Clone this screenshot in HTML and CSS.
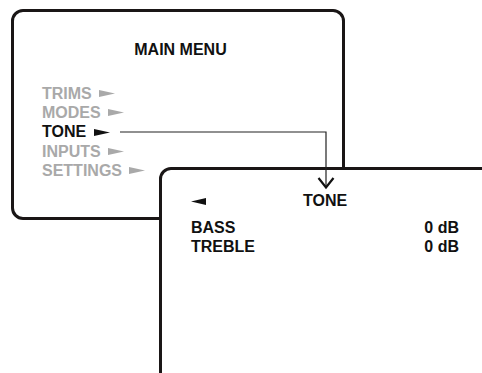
FILE: index.html
```html
<!DOCTYPE html>
<html lang="en">
<head>
  <meta charset="UTF-8" />
  <title>Main Menu - Tone</title>
  <link rel="stylesheet" href="styles.css">
</head>
<body>

  <div class="canvas">

    <div class="screen main-screen">
      <h2 class="screen-title">MAIN MENU</h2>
      <ul class="menu">
        <li class="menu-item">TRIMS <svg class="pointer" viewBox="0 0 16 7"><polygon points="0,0 16,3.5 0,7" /></svg></li>
        <li class="menu-item">MODES <svg class="pointer" viewBox="0 0 16 7"><polygon points="0,0 16,3.5 0,7" /></svg></li>
        <li class="menu-item active">TONE <svg class="pointer" viewBox="0 0 16 7"><polygon points="0,0 16,3.5 0,7" /></svg></li>
        <li class="menu-item">INPUTS <svg class="pointer" viewBox="0 0 16 7"><polygon points="0,0 16,3.5 0,7" /></svg></li>
        <li class="menu-item">SETTINGS <svg class="pointer" viewBox="0 0 16 7"><polygon points="0,0 16,3.5 0,7" /></svg></li>
      </ul>
    </div>

    <div class="screen tone-screen">
      <div class="tone-header">
        <svg class="back" viewBox="0 0 15 7"><polygon points="15,0 0,3.5 15,7" /></svg>
        <h2 class="screen-title">TONE</h2>
      </div>
      <div class="settings">
        <span>BASS</span><span>0 dB</span>
        <span>TREBLE</span><span>0 dB</span>
      </div>
    </div>

    <!-- connector from TONE item down into the tone screen -->
    <svg class="connector" width="482" height="373" viewBox="0 0 482 373">
      <polyline points="120,132 326,132 326,187" fill="none" stroke="#222" stroke-width="1.2" />
      <polyline points="318.5,178 326,187.5 333.5,178" fill="none" stroke="#111" stroke-width="2.2" />
    </svg>

  </div>

</body>
</html>
```

FILE: styles.css
```css
body {
  margin: 0;
  background: #fff;
  font-family: "Liberation Sans", Arial, sans-serif;
  overflow: hidden;
}

.canvas {
  position: relative;
  width: 482px;
  height: 373px;
  overflow: hidden;
}

.screen {
  position: absolute;
  box-sizing: border-box;
  border: 3px solid #1a1616;
  border-radius: 12px;
  background: #fff;
}

.main-screen {
  left: 11px;
  top: 9px;
  width: 334px;
  height: 211px;
  padding: 28px 0 0 28px;
}

.tone-screen {
  left: 159px;
  top: 167px;
  width: 360px;
  height: 240px;
  padding: 21px 0 0 29px;
}

.screen-title {
  margin: 0;
  font-size: 16px;
  line-height: 19px;
  font-weight: bold;
  color: #111;
}

.main-screen .screen-title {
  text-align: center;
  padding-right: 23px;
}

.menu {
  list-style: none;
  margin: 25px 0 0;
  padding: 0;
}

.menu-item {
  display: flex;
  align-items: center;
  font-size: 16px;
  line-height: 19.2px;
  font-weight: bold;
  color: #a9a9a9;
  white-space: pre;
}

.menu-item.active {
  color: #111;
}

.pointer {
  width: 16px;
  height: 7px;
  margin-left: 3px;
  fill: currentColor;
}

.tone-header {
  display: flex;
  align-items: center;
  height: 19px;
}

.back {
  width: 15px;
  height: 7px;
  fill: #111;
  margin-top: 2px;
}

.tone-header .screen-title {
  margin-left: 97px;
}

.settings {
  display: grid;
  grid-template-columns: 1fr auto;
  width: 268px;
  margin-top: 9px;
  font-size: 16px;
  line-height: 18.5px;
  font-weight: bold;
  color: #111;
}

.connector {
  position: absolute;
  left: 0;
  top: 0;
}
```
